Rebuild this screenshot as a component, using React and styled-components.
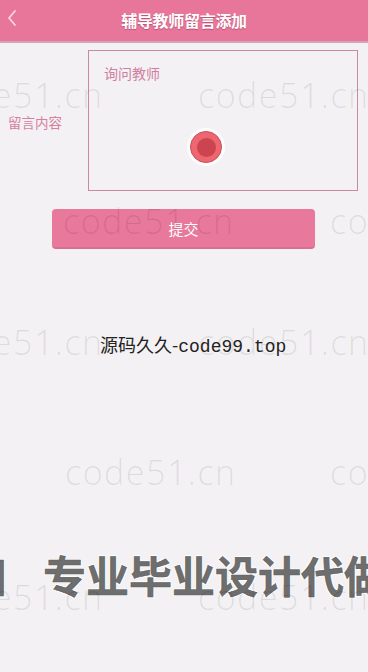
import styled, { createGlobalStyle } from "styled-components"

const GlobalStyle = createGlobalStyle`
  html, body {
    margin: 0;
    padding: 0;
    background: #f3f1f3;
  }
  body {
    font-family: "Noto Sans CJK SC", "Noto Sans", sans-serif;
  }
`

const marks = [
    { top: 108, lefts: [-68, 198] },
    { top: 234, lefts: [63, 330] },
    { top: 355, lefts: [-68, 198] },
    { top: 485, lefts: [65, 330] },
    { top: 610, lefts: [-68, 198] },
]

export default function App() {
    return (<>
        <GlobalStyle />
        <Page>
            <Header>
                <BackButton>
                    <svg width="12" height="18" viewBox="0 0 12 18">
                        <path d="M9 2 L3 9 L9 16" fill="none" stroke="#f8d6e2" strokeWidth="1.8" strokeLinecap="round" strokeLinejoin="round" />
                    </svg>
                </BackButton>
                <Title>辅导教师留言添加</Title>
            </Header>

            <FormRow>
                <Label>留言内容</Label>
                <MessageBox>
                    <Placeholder>询问教师</Placeholder>
                    <TouchDot><span /></TouchDot>
                </MessageBox>
            </FormRow>

            <SubmitButton>提交</SubmitButton>

            <SourceLine>源码久久-<Mono>code99.top</Mono></SourceLine>

            <Banner>
                <Sliver>口</Sliver>
                专业毕业设计代做
            </Banner>

            <Watermarks>
                {marks.map((row, i) => row.lefts.map(left => (
                    <Mark key={i + '-' + left} style={{ top: row.top - 32, left }}>code51.cn</Mark>
                )))}
            </Watermarks>
        </Page>
    </>)
}

const Page = styled.div`
    position: relative;
    width: 368px;
    height: 672px;
    overflow: hidden;
    display: flex;
    flex-direction: column;
    background: #f3f1f3;
`

const Header = styled.div`
    height: 41px;
    background: #e8769b;
    border-bottom: 2px solid #d3a6b5;
    display: flex;
    align-items: center;
    justify-content: center;
    position: relative;
    flex-shrink: 0;
`

const BackButton = styled.div`
    position: absolute;
    left: 6px;
    top: 9px;
    width: 14px;
    height: 18px;
    display: flex;
`

const Title = styled.div`
    color: #fff;
    font-size: 16px;
    font-weight: 700;
    letter-spacing: -0.3px;
    text-shadow: 0 1px 1px rgba(120, 40, 70, 0.45);
    margin-top: -2px;
`

const FormRow = styled.div`
    display: flex;
    align-items: center;
    margin-top: 7px;
`

const Label = styled.div`
    width: 88px;
    padding-left: 8px;
    box-sizing: border-box;
    font-size: 13.5px;
    color: #d87ea0;
    margin-top: 2px;
`

const MessageBox = styled.div`
    position: relative;
    width: 270px;
    height: 141px;
    box-sizing: border-box;
    border: 1px solid #c98a9f;
    padding: 13px 15px;
`

const Placeholder = styled.div`
    font-size: 14px;
    color: #cf7fa0;
    line-height: 18px;
`

const TouchDot = styled.div`
    position: absolute;
    left: 101px;
    top: 80px;
    width: 30px;
    height: 30px;
    border-radius: 50%;
    background: #ee6670;
    border: 1px solid #c9505a;
    box-shadow: 0 0 0 3px rgba(255, 255, 255, 0.8);
    display: flex;
    align-items: center;
    justify-content: center;

    span {
        width: 19px;
        height: 19px;
        border-radius: 50%;
        background: #cb4450;
        margin-top: 1px;
    }
`

const SubmitButton = styled.div`
    margin: 18px 0 0 52px;
    width: 263px;
    height: 40px;
    box-sizing: border-box;
    border-radius: 4px;
    background: #e8789c;
    border-bottom: 2px solid #d96e90;
    color: #fff;
    font-size: 15px;
    display: flex;
    align-items: center;
    justify-content: center;
`

const SourceLine = styled.div`
    margin-top: 82px;
    padding-left: 100px;
    font-size: 18px;
    line-height: 26px;
    color: #222;
    white-space: nowrap;
`

const Mono = styled.span`
    font-family: "Liberation Mono", "DejaVu Sans Mono", monospace;
    font-size: 18px;
`

const Banner = styled.div`
    margin-top: 188px;
    margin-left: -35px;
    font-size: 43px;
    line-height: 52px;
    font-weight: 700;
    color: #6e6e6e;
    white-space: nowrap;
    -webkit-text-stroke: 0.5px #5a5a5a;
    text-shadow: 1px 1px 0 #fff, -1px -1px 0 #fff, 1px -1px 0 #fff, -1px 1px 0 #fff;
`

const Sliver = styled.span`
    margin-right: 35px;
`

const Watermarks = styled.div`
    position: absolute;
    inset: 0;
    pointer-events: none;
`

const Mark = styled.div`
    position: absolute;
    font-family: "Open Sans", "Liberation Sans", sans-serif;
    font-weight: 300;
    font-size: 34px;
    line-height: 38px;
    letter-spacing: 1.5px;
    color: rgba(0, 0, 0, 0.09);
    white-space: nowrap;
`
